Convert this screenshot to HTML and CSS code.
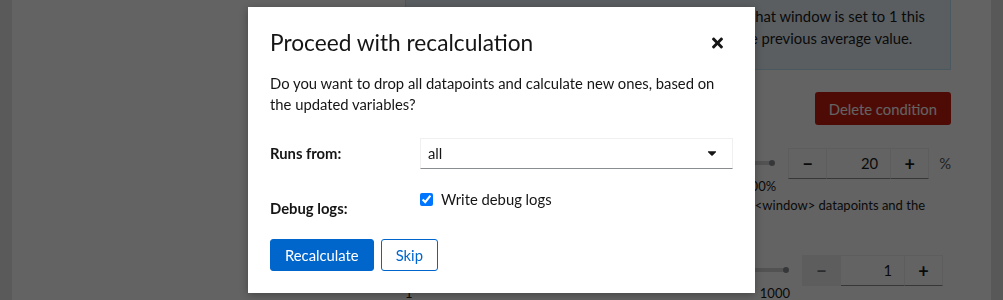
FILE: index.html
```html
<!DOCTYPE html>
<html lang="en">
<head>
    <meta charset="UTF-8">
    <meta name="viewport" content="width=device-width, initial-scale=1.0">
    <title>Edit condition - Recalculate</title>
    <link rel="stylesheet" href="styles.css">
</head>
<body>
    <div class="app">
        <div class="side-strip"></div>

        <main class="main">
            <div class="main-scroll">
                <div class="column">
                    <div class="alert-info">
                        <p class="alert-line">Compares each new datapoint with the average. If that window is set to 1 this</p>
                        <p class="alert-line">datapoint, and the condition only compares it to the previous average value.</p>
                    </div>

                    <div class="actions-row">
                        <button class="btn-danger">Delete condition</button>
                    </div>

                    <div class="slider-row">
                        <div class="slider">
                            <div class="slider-rail"><span class="slider-thumb"></span></div>
                            <div class="slider-steps"><span>0%</span><span>100%</span></div>
                        </div>
                        <div class="number-input">
                            <button class="num-btn">&minus;</button>
                            <span class="num-value">20</span>
                            <button class="num-btn">+</button>
                        </div>
                        <span class="unit">%</span>
                    </div>
                    <p class="helper">
                        <span class="helper-first">Averages the last &lt;window&gt; datapoints and the</span>
                        <span class="helper-rest">new value.</span>
                    </p>

                    <div class="slider-row slider-row-plain">
                        <div class="slider">
                            <div class="slider-rail"><span class="slider-thumb"></span></div>
                            <div class="slider-steps"><span>1</span><span>1000</span></div>
                        </div>
                        <div class="number-input">
                            <button class="num-btn" disabled>&minus;</button>
                            <span class="num-value">1</span>
                            <button class="num-btn">+</button>
                        </div>
                    </div>
                </div>
            </div>
        </main>

        <div class="side-strip side-strip-right"></div>
    </div>

    <!-- Modal -->
    <div class="backdrop">
        <div class="modal" role="dialog">
            <header class="modal-header">
                <h1 class="modal-title">Proceed with recalculation</h1>
                <button class="modal-close" aria-label="Close">
                    <svg viewBox="0 0 352 512" width="11" height="16">
                        <path fill="currentColor" d="M242.72 256l100.07-100.07c12.28-12.280 12.28-32.19 0-44.48l-22.24-22.24c-12.28-12.28-32.19-12.28-44.48 0L176 189.28 75.93 89.21c-12.28-12.28-32.19-12.28-44.48 0L9.21 111.45c-12.28 12.28-12.28 32.19 0 44.48L109.28 256 9.21 356.07c-12.28 12.28-12.28 32.19 0 44.48l22.24 22.24c12.28 12.28 32.2 12.28 44.48 0L176 322.72l100.07 100.07c12.28 12.28 32.2 12.28 44.48 0l22.24-22.24c12.28-12.28 12.28-32.19 0-44.48L242.72 256z"/>
                    </svg>
                </button>
            </header>

            <p class="modal-text">
                Do you want to drop all datapoints and calculate new ones, based on the updated variables?
            </p>

            <form class="modal-form">
                <label class="form-label" for="runsFrom">Runs from:</label>
                <div class="select-wrap">
                    <select id="runsFrom" class="form-select">
                        <option>all</option>
                    </select>
                    <svg class="select-caret" viewBox="0 0 320 512" width="10" height="14">
                        <path fill="currentColor" d="M31.3 192h257.3c17.8 0 26.7 21.5 14.1 34.1L174.1 354.8c-7.8 7.8-20.5 7.8-28.3 0L17.2 226.1C4.6 213.5 13.5 192 31.3 192z"/>
                    </svg>
                </div>

                <span class="form-label form-label-check">Debug logs:</span>
                <label class="check">
                    <input type="checkbox" checked>
                    <span>Write debug logs</span>
                </label>

                <div class="form-actions">
                    <button type="button" class="btn-primary">Recalculate</button>
                    <button type="button" class="btn-link">Skip</button>
                </div>
            </form>
        </div>
    </div>
</body>
</html>
```

FILE: styles.css
```css
* {
    margin: 0;
    padding: 0;
    box-sizing: border-box;
}

body {
    font-family: 'Lato', 'Liberation Sans', sans-serif;
    font-size: 14.8px;
    line-height: 1.5;
    color: #151515;
    background: #fff;
    height: 100vh;
    overflow: hidden;
}

button,
select,
input {
    font: inherit;
    color: inherit;
}

/* ---------- page behind the modal ---------- */

.app {
    display: flex;
    height: 100vh;
}

.side-strip {
    width: 12px;
    background: #e8e8e8;
    flex-shrink: 0;
}

.side-strip-right {
    background: #e2e2e2;
}

.main {
    flex: 1;
    overflow: hidden;
    background: #fff;
}

/* page is scrolled down a bit */
.main-scroll {
    margin-top: -16px;
    padding-right: 40px;
}

.column {
    width: 546px;
    margin-left: auto;
}

.alert-info {
    background: #e7f1fa;
    border: 1px solid #bee1f4;
    border-top: none;
    padding: 22px 16px 20px 16px;
}

.alert-line {
    white-space: nowrap;
    line-height: 21.6px;
}

.actions-row {
    display: flex;
    justify-content: flex-end;
    margin-top: 22px;
}

.btn-danger {
    background: #c9190b;
    color: #fff;
    border: none;
    border-radius: 3px;
    height: 33px;
    padding: 0 14px;
}

.slider-row {
    display: flex;
    align-items: flex-start;
    margin-top: 23px;
}

.slider-row-plain {
    margin-top: 20px;
    padding-right: 8px;
}

.slider {
    flex: 1;
    padding-top: 13px;
    margin-right: 15px;
}

.slider-rail {
    height: 4px;
    background: #d2d2d2;
    border-radius: 2px;
    position: relative;
}

.slider-thumb {
    position: absolute;
    right: -2px;
    top: -1px;
    width: 6px;
    height: 6px;
    border-radius: 50%;
    background: #8a8d90;
}

.slider-steps {
    display: flex;
    justify-content: space-between;
    margin-top: 11px;
    margin-right: -3px;
    font-size: 13px;
    line-height: 20px;
}

.number-input {
    display: flex;
    height: 31px;
}

.num-btn {
    width: 39px;
    background: #fff;
    border: 1px solid #f0f0f0;
    border-bottom-color: #8a8d90;
    font-size: 18px;
    font-weight: 700;
    line-height: 1;
}

.num-btn:disabled {
    background: #f0f0f0;
    color: #6a6e73;
    border-bottom-color: #f0f0f0;
}

.num-value {
    width: 63px;
    text-align: right;
    padding: 0 12px;
    border-top: 1px solid #f0f0f0;
    border-bottom: 1px solid #8a8d90;
    line-height: 29px;
}

.unit {
    margin-left: 10px;
    line-height: 31px;
    color: #4f5255;
}

.helper {
    margin-top: -1px;
    font-size: 13px;
    line-height: 20px;
    white-space: nowrap;
}

.helper-first {
    display: block;
    text-align: right;
    padding-right: 26px;
}

.helper-rest {
    display: block;
}

/* ---------- modal ---------- */

.backdrop {
    position: fixed;
    inset: 0;
    background: rgba(3, 3, 3, 0.62);
    display: flex;
    align-items: center;
    justify-content: center;
}

.modal {
    width: 507px;
    background: #fff;
    padding: 21px 22px 22px;
    box-shadow: 0 2px 8px rgba(3, 3, 3, 0.3);
}

.modal-header {
    display: flex;
    align-items: center;
    justify-content: space-between;
}

.modal-title {
    font-size: 22.7px;
    font-weight: 400;
    line-height: 30px;
}

.modal-close {
    background: none;
    border: none;
    width: 30px;
    height: 30px;
    margin-right: 1px;
    display: flex;
    align-items: center;
    justify-content: center;
    color: #151515;
}

.modal-text {
    margin-top: 15px;
    line-height: 21.6px;
}

.modal-form {
    display: grid;
    grid-template-columns: 150px 1fr;
    row-gap: 22px;
    margin-top: 22px;
}

.form-label {
    font-weight: 700;
    line-height: 21.6px;
    padding-top: 5px;
}

.form-label-check {
    padding-top: 7px;
}

.select-wrap {
    position: relative;
}

.form-select {
    appearance: none;
    width: 100%;
    height: 31px;
    padding: 0 30px 0 7px;
    background: #fff;
    border: 1px solid #f0f0f0;
    border-bottom-color: #8a8d90;
    border-radius: 0;
}

.select-caret {
    position: absolute;
    right: 16px;
    top: 8px;
    pointer-events: none;
}

.check {
    display: flex;
    align-items: center;
    align-self: start;
    gap: 8px;
    line-height: 21.6px;
    margin-top: -2px;
}

.check input {
    width: 13px;
    height: 13px;
    margin: 0;
}

.form-actions {
    grid-column: 1 / -1;
    display: flex;
    gap: 7px;
    margin-top: -2px;
}

.btn-primary,
.btn-link {
    height: 32px;
    padding: 0 14px;
    border-radius: 3px;
    cursor: pointer;
}

.btn-primary {
    background: #0066cc;
    color: #fff;
    border: 1px solid #0066cc;
}

.btn-link {
    background: #fff;
    color: #0066cc;
    border: 1px solid #0066cc;
}
```
